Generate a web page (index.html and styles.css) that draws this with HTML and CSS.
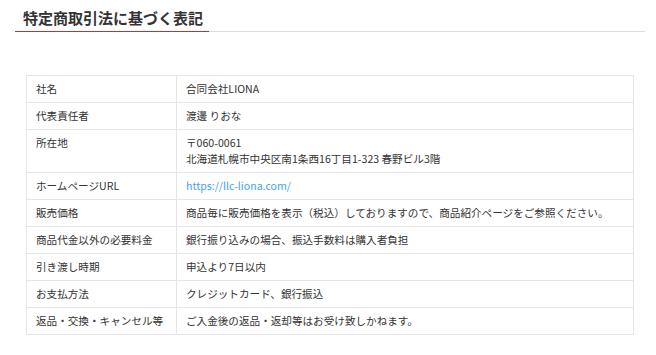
FILE: index.html
```html
<!DOCTYPE html>
<html lang="ja">
<head>
<meta charset="utf-8">
<link rel="stylesheet" href="styles.css">
</head>
<body>
<div class="page">
  <div class="heading">
    <h1 class="heading-title">特定商取引法に基づく表記</h1>
  </div>
  <table class="law-table">
    <tr><th>社名</th><td>合同会社LIONA</td></tr>
    <tr><th>代表責任者</th><td>渡邊 りおな</td></tr>
    <tr><th>所在地</th><td>〒060-0061<br>北海道札幌市中央区南1条西16丁目1-323 春野ビル3階</td></tr>
    <tr><th>ホームページURL</th><td><a class="link" href="#">https://llc-liona.com/</a></td></tr>
    <tr><th>販売価格</th><td>商品毎に販売価格を表示（税込）しておりますので、商品紹介ページをご参照ください。</td></tr>
    <tr><th>商品代金以外の必要料金</th><td>銀行振り込みの場合、振込手数料は購入者負担</td></tr>
    <tr><th>引き渡し時期</th><td>申込より7日以内</td></tr>
    <tr><th>お支払方法</th><td>クレジットカード、銀行振込</td></tr>
    <tr><th>返品・交換・キャンセル等</th><td>ご入金後の返品・返却等はお受け致しかねます。</td></tr>
  </table>
</div>
</body>
</html>
```
FILE: styles.css
```css
html, body {
  margin: 0;
  padding: 0;
  background: #fff;
}
body {
  font-family: "Noto Sans CJK JP", "Noto Sans", sans-serif;
  color: #333;
}
.page {
  width: 630px;
  margin-left: 15px;
  padding-top: 7px;
}
.heading {
  border-bottom: 1px solid #dcdcdc;
  display: flex;
}
.heading-title {
  margin: 0;
  font-size: 15px;
  font-weight: bold;
  line-height: 22px;
  padding: 0 6px 2px 8px;
  border-bottom: 1px solid #b23a35;
  margin-bottom: -1px;
  color: #333;
  width: 180px;
}
.law-table {
  margin: 43px 0 0 11px;
  width: 608px;
  border-collapse: collapse;
  font-size: 10.6px;
  line-height: 16px;
  background: #fff;
}
.law-table th,
.law-table td {
  border: 1px solid #e6e6e6;
  padding: 5px 9px;
  text-align: left;
  vertical-align: top;
  font-weight: normal;
  white-space: nowrap;
}
.law-table th {
  width: 131px;
}
.link {
  color: #42a2f2;
  text-decoration: none;
}
```
